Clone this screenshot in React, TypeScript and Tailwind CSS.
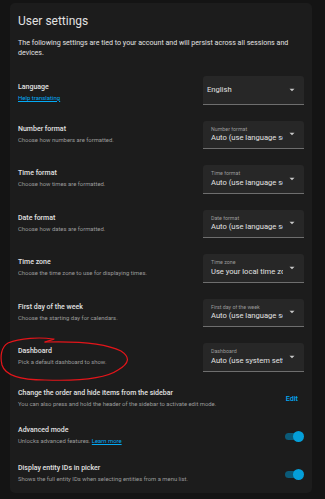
import React from "react";

type SelectRow = {
    label: string;
    desc?: string;
    link?: string;
    field?: string;
    value: string;
};

const selectRows: SelectRow[] = [
    { label: "Language", link: "Help translating", value: "English" },
    { label: "Number format", desc: "Choose how numbers are formatted.", field: "Number format", value: "Auto (use language setting)" },
    { label: "Time format", desc: "Choose how times are formatted.", field: "Time format", value: "Auto (use language setting)" },
    { label: "Date format", desc: "Choose how dates are formatted.", field: "Date format", value: "Auto (use language setting)" },
    { label: "Time zone", desc: "Choose the time zone to use for displaying times.", field: "Time zone", value: "Use your local time zone" },
    { label: "First day of the week", desc: "Choose the starting day for calendars.", field: "First day of the week", value: "Auto (use language setting)" },
    { label: "Dashboard", desc: "Pick a default dashboard to show.", field: "Dashboard", value: "Auto (use system settings)" },
];

function Arrow() {
    return (
        <svg width="6" height="4" viewBox="0 0 6 4" className="shrink-0">
            <path d="M0.5 0.8 L5.5 0.8 L3 3.3 Z" fill="#c8c8c8" />
        </svg>
    );
}

function Select({ field, value }: { field?: string; value: string }) {
    return (
        <div className="w-[101px] h-[28.5px] bg-[#272727] rounded-t-[3px] border-b border-[#6e6e6e] flex items-center pr-[9px] shrink-0">
            {field ? (
                <div className="flex-1 min-w-0 pl-[8px] mr-[6px] flex flex-col leading-none overflow-hidden">
                    <span className="text-[5.3px] text-[#9a9a9a] whitespace-nowrap">{field}</span>
                    <span className="text-[7.6px] text-[#e1e1e1] whitespace-nowrap mt-[2px]">{value}</span>
                </div>
            ) : (
                <div className="flex-1 min-w-0 pl-[4px] text-[7.6px] text-[#e1e1e1] whitespace-nowrap">{value}</div>
            )}
            <Arrow />
        </div>
    );
}

function Toggle() {
    return (
        <div className="relative w-[19px] h-[11px] flex items-center shrink-0">
            <div className="w-[17px] h-[7px] rounded-full bg-[#0b5a78]" />
            <div className="absolute right-0 w-[11px] h-[11px] rounded-full bg-[#049fd9]" />
        </div>
    );
}

function TextBlock({ label, children }: { label: string; children: React.ReactNode }) {
    return (
        <div className="flex flex-col leading-none">
            <span className="text-[7px] text-[#e1e1e1] font-medium">{label}</span>
            <span className="text-[5.9px] text-[#9b9b9b] mt-[5px]">{children}</span>
        </div>
    );
}

export default function App() {
    return (
        <div className="w-[325px] h-[499px] bg-[#141414] overflow-hidden pt-[3px] pl-[10px] font-['Roboto',sans-serif]">
            <div className="relative w-[302px] h-[490px] bg-[#1c1c1c] rounded-[5px] pt-[11px] pl-[8px] pr-[8px] overflow-hidden">
                <h1 className="text-[12px] text-[#e1e1e1] leading-[14px] font-normal">User settings</h1>
                <p className="mt-[10px] text-[7.1px] leading-[10px] text-[#e1e1e1]">
                    The following settings are tied to your account and will persist across all sessions and devices.
                </p>

                <div className="mt-[10px]">
                    {selectRows.map(row => (
                        <div key={row.label} className="h-[44.5px] flex items-center justify-between">
                            {row.link ? (
                                <div className="flex flex-col leading-none mt-[4px]">
                                    <span className="text-[7px] text-[#e1e1e1] font-medium">{row.label}</span>
                                    <span className="text-[6px] text-[#03a9f4] underline mt-[4px]">{row.link}</span>
                                </div>
                            ) : (
                                <TextBlock label={row.label}>{row.desc}</TextBlock>
                            )}
                            <Select field={row.field} value={row.value} />
                        </div>
                    ))}

                    <div className="h-[37px] flex items-center justify-between pt-[2px]">
                        <TextBlock label="Change the order and hide items from the sidebar">
                            You can also press and hold the header of the sidebar to activate edit mode.
                        </TextBlock>
                        <span className="text-[7.2px] text-[#03a9f4] font-medium pr-[6px]">Edit</span>
                    </div>

                    <div className="h-[39px] flex items-center justify-between">
                        <TextBlock label="Advanced mode">
                            Unlocks advanced features. <span className="text-[#03a9f4] underline">Learn more</span>
                        </TextBlock>
                        <Toggle />
                    </div>

                    <div className="h-[37.5px] flex items-center justify-between">
                        <TextBlock label="Display entity IDs in picker">
                            Shows the full entity IDs when selecting entities from a menu list.
                        </TextBlock>
                        <Toggle />
                    </div>
                </div>
            </div>

            {/* hand-drawn red circle around the Dashboard row */}
            <svg className="absolute left-0 top-[335px]" width="135" height="50" viewBox="0 0 135 50">
                <path
                    d="M53 4 C40 2 20 3 8 8 C1 12 0 22 2 30 C5 40 20 45 45 45 C75 46 105 44 118 35 C130 28 130 22 121 16 C105 8 80 6 45 7"
                    fill="none"
                    stroke="#e3151a"
                    strokeWidth="1.2"
                    strokeLinecap="round"
                />
                <path d="M45 7 C50 5 53 5 54 4" fill="none" stroke="#e3151a" strokeWidth="1.1" strokeLinecap="round" />
            </svg>
        </div>
    );
}
